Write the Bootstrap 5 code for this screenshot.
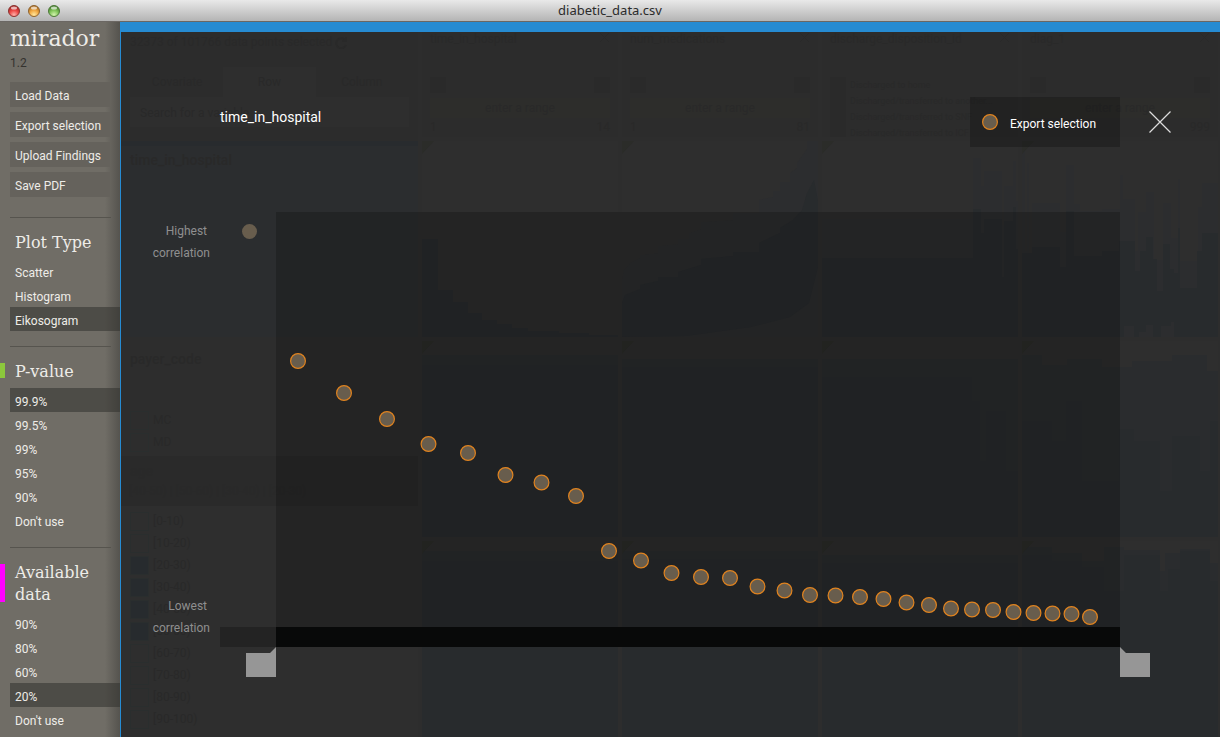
<!DOCTYPE html>
<html lang="en">
<head>
<meta charset="utf-8">
<meta name="viewport" content="width=device-width, initial-scale=1">
<title>diabetic_data.csv</title>
<link rel="stylesheet" href="https://cdn.jsdelivr.net/npm/bootstrap@5.3.0/dist/css/bootstrap.min.css">
<style>
  body { font: 12px/24px Roboto, sans-serif; background: #2d2d2d; }
  a { color: inherit; text-decoration: none; }

  /* window frame */
  .titlebar { height: 22px; background: linear-gradient(#e9e9e9, #b4b4b4); border-bottom: 1px solid #6b6763; color: #2b2b2b; font: 13px/21px "Noto Sans", sans-serif; }
  .lights { left: 7px; top: 4px; }

  /* sidebar */
  .side { width: 120px; background: linear-gradient(to right, transparent 105px, #55534e 120px), #706d66; color: #eeece8; }
  .brand { padding-left: 10px; font: 22px/34px "DejaVu Serif", serif; }
  .version { padding-left: 10px; line-height: 14px; color: #35332f; }
  .side-btns { gap: 5px; margin: 12px 10px 21px; }
  .side-btn { height: 25px; padding: 4px 0 0 5px; border: 0; background: #65625c; color: #eeece8; line-height: 21px; text-align: left; white-space: nowrap; }
  .group { padding: 14px 0 16px; }
  .group:last-child { padding-bottom: 0; }
  .group::before { content: ""; position: absolute; top: -1px; left: 10px; right: 9px; border-top: 1px solid #56544e; }
  .group h2 { margin: 0 15px 5px; font: 16px/22px "DejaVu Serif", serif; }
  .group a { display: block; height: 24px; margin-left: 10px; padding: 2px 0 0 5px; line-height: 24px; }
  .group a.active { background: rgba(50, 49, 45, .55); }
  .flag::after { content: ""; position: absolute; left: 0; top: 16px; width: 5px; height: 15px; background: #8cc83c; }
  .flag-tall::after { height: 38px; background: #f0f; }

  /* main area: dimmed matrix below, ranking dialog above */
  .stage { border-left: 1px solid #268bd2; border-top: 10px solid #268bd2; background: #2d2d2d; }
  .matrix { display: grid; grid-template-columns: 297px 1fr; column-gap: 4px; color: #292929; padding-right: 2px; }
  .tiles { display: grid; grid-template: 105px repeat(3, minmax(0, 1fr)) / repeat(4, minmax(0, 1fr)); gap: 4px; }
  .tiles svg.mosaic { width: 100%; height: 100%; background: #2e2e2e; }
  .head-cell { padding: 0 8px; overflow: hidden; background: #2c2c2c; }
  .head-name { height: 45px; line-height: 14px; }
  .range { background: #2d2d2b; height: 20px; line-height: 20px; margin-top: 5px; }
  .ends-row { line-height: 18px; }
  .nub { width: 16px; height: 16px; background: #2a2a2a; }
  .picks { font-size: 9px; line-height: 16px; padding-left: 20px; white-space: nowrap; background: linear-gradient(#2a2a2a, #2a2a2a) 0 0 / 16px 100% no-repeat; }
  .vars { background: #2c2c2c; }
  .vars-head { flex: 0 0 109px; }
  .count { height: 35px; line-height: 20px; padding: 0 9px; }
  .tabs-row { height: 30px; line-height: 30px; margin: 0 10px; }
  .tab-on { background: #2e2e2e; }
  .find { height: 30px; margin: 0 9px; background: #2e2e2e; padding: 4px 10px; }
  .var-a { background: #2b2d2f; border-top: 5px solid #282b2e; flex: 0 0 196px; }
  .var-b { flex: 0 0 119px; background: #2d2d2d; }
  .var-b .chk-row:first-of-type { margin-top: 36px; }
  .var-c { background: #2a2a2a; flex: 0 0 50px; line-height: 22px; padding-top: 5px; }
  .var-c div { line-height: 20px; }
  .ages { background: #2e2e2e; flex: 1 0 0; padding-top: 4px; }
  .var-name { font-size: 14px; font-weight: 500; padding: 0 9px; line-height: 28px; }
  .chk { width: 19px; height: 19px; border: 1px solid #2a2e2e; }
  .chk.on { background: #272b2e; }
  .chk-row { height: 22px; gap: 4px; display: flex; align-items: center; padding-left: 9px; }

  .rank { padding: 65px 0 90px; }
  .rank-head { padding-left: 99px; margin-bottom: 65px; height: 50px; color: #fff; }
  .rank-title { font-size: 14px; padding-top: 8px; }
  .export { width: 150px; height: 50px; border: 0; background: rgba(0, 0, 0, .22); color: #fff; padding: 0 0 0 12px; gap: 12px; }
  .shut { width: 100px; border: 0; background: none; padding: 0 20px 0 0; }
  .ends { width: 155px; padding: 8px 66px 8px 0; color: #8f8f8f; line-height: 22px; text-align: right; }
  .legend-dot { position: absolute; left: 121px; top: 12px; width: 15px; height: 15px; border-radius: 50%; background: #685d4d; }
  .plot { background: rgba(0, 0, 0, .2); margin-right: 100px; }
  .axis { position: absolute; bottom: 0; height: 20px; background: #080909; width: 100%; }
  .axis-lead { position: absolute; bottom: 0; right: 0; width: 56px; height: 20px; background: #232323; }
  .grip { position: absolute; top: 100%; width: 30px; height: 30px; padding: 0; border: 0; background: #969696; }
  .grip-low { right: 100%; clip-path: polygon(100% 0, 100% 100%, 0 100%, 0 6px, 80% 6px); }
  .grip-high { left: 100%; clip-path: polygon(0 0, 0 100%, 100% 100%, 100% 6px, 20% 6px); }
  .dots circle { fill: #685d4d; stroke: #e0831f; stroke-width: 1.2; }
</style>
</head>
<body>
<div class="d-flex flex-column min-vh-100">
  <header class="titlebar position-relative text-center flex-shrink-0">
    <svg class="lights position-absolute" width="56" height="14" aria-hidden="true">
      <defs>
        <radialGradient id="r" cx=".5" cy=".85" r=".8"><stop offset="0" stop-color="#ffb3ab"/><stop offset=".5" stop-color="#ee4b48"/><stop offset="1" stop-color="#a3201f"/></radialGradient>
        <radialGradient id="y" cx=".5" cy=".85" r=".8"><stop offset="0" stop-color="#ffe9a0"/><stop offset=".5" stop-color="#f2ab45"/><stop offset="1" stop-color="#a5651a"/></radialGradient>
        <radialGradient id="g" cx=".5" cy=".85" r=".8"><stop offset="0" stop-color="#d5f5b0"/><stop offset=".5" stop-color="#84c75c"/><stop offset="1" stop-color="#3f7a28"/></radialGradient>
      </defs>
      <g stroke-width="1"><circle cx="7" cy="7" r="5.5" fill="url(#r)" stroke="#8a3532"/><circle cx="27" cy="7" r="5.5" fill="url(#y)" stroke="#8f6430"/><circle cx="47" cy="7" r="5.5" fill="url(#g)" stroke="#4e7a3a"/></g>
      <g fill="#fff" opacity=".65"><ellipse cx="7" cy="4" rx="3" ry="1.5"/><ellipse cx="27" cy="4" rx="3" ry="1.5"/><ellipse cx="47" cy="4" rx="3" ry="1.5"/></g>
    </svg>
    diabetic_data.csv
  </header>

  <div class="d-flex flex-grow-1">
    <nav class="side flex-shrink-0">
      <div class="brand">mirador</div>
      <div class="version">1.2</div>
      <div class="side-btns d-grid">
        <button class="side-btn" type="button">Load Data</button>
        <button class="side-btn" type="button">Export selection</button>
        <button class="side-btn" type="button">Upload Findings</button>
        <button class="side-btn" type="button">Save PDF</button>
      </div>
      <section class="group position-relative">
        <h2>Plot Type</h2>
        <a href="#">Scatter</a><a href="#">Histogram</a><a href="#" class="active">Eikosogram</a>
      </section>
      <section class="group flag position-relative">
        <h2>P-value</h2>
        <a href="#" class="active">99.9%</a><a href="#">99.5%</a><a href="#">99%</a><a href="#">95%</a><a href="#">90%</a><a href="#">Don't use</a>
      </section>
      <section class="group flag flag-tall position-relative">
        <h2>Available data</h2>
        <a href="#">90%</a><a href="#">80%</a><a href="#">60%</a><a href="#" class="active">20%</a><a href="#">Don't use</a>
      </section>
    </nav>

    <main class="stage position-relative flex-grow-1 d-flex">
      <div class="matrix position-absolute top-0 start-0 w-100 h-100 overflow-hidden">
        <div class="vars d-flex flex-column overflow-hidden">
          <div class="vars-head">
            <div class="count">32373 of 101766 data points selected
              <svg width="12" height="12" fill="none" stroke="#292929" stroke-width="2" aria-hidden="true"><path d="M10 3A5 5 0 1 0 11 8M11 0V4H7"/></svg>
            </div>
            <div class="tabs-row row g-0 text-center"><span class="col">Covariate</span><span class="col tab-on">Row</span><span class="col">Column</span></div>
            <div class="find">Search for a variable</div>
          </div>
          <div class="var-a"><div class="var-name">time_in_hospital</div></div>
          <div class="var-b">
            <h3 class="var-name m-0 pt-2">payer_code</h3>
            <div class="chk-row"><i class="chk"></i>MC</div>
            <div class="chk-row"><i class="chk"></i>MD</div>
          </div>
          <div class="var-c"><div class="var-name">age</div><div class="px-2 text-nowrap">[40-50) | [50-60) | [30-40) | [20-30)</div></div>
          <div class="ages" id="ages"></div>
        </div>
        <div class="tiles" id="tiles"></div>
      </div>

      <section class="rank position-relative flex-grow-1 d-flex flex-column">
        <div class="rank-head d-flex">
          <div class="rank-title flex-grow-1">time_in_hospital</div>
          <button class="export d-flex align-items-center" type="button">
            <svg width="16" height="16" class="dots" aria-hidden="true"><circle cx="8" cy="8" r="7.4"/></svg>
            <span class="pt-1">Export selection</span>
          </button>
          <button class="shut d-flex align-items-center justify-content-center" type="button" aria-label="Close">
            <svg width="22" height="22" stroke="#ddd" stroke-width="1.2"><path d="M.5.5 21.5 21.5M21.5.5.5 21.5"/></svg>
          </button>
        </div>
        <div class="d-flex flex-grow-1">
          <div class="ends position-relative d-flex flex-column justify-content-between flex-shrink-0">
            <span>Highest&nbsp;<br>correlation</span>
            <span>Lowest&nbsp;<br>correlation</span>
            <i class="legend-dot"></i><i class="axis-lead"></i>
          </div>
          <div class="plot position-relative flex-grow-1">
            <div class="axis"></div>
            <svg class="dots position-absolute top-0 start-0 w-100 h-100" id="dots" role="img" aria-label="Correlation ranking"></svg>
            <button class="grip grip-low" type="button" aria-label="Lower bound"></button>
            <button class="grip grip-high" type="button" aria-label="Upper bound"></button>
          </div>
        </div>
      </section>
    </main>
  </div>
</div>
<script>
  // [position, depth] of every ranked variable on an 844 x 435 plot
  const ranked = [[22,149],[68,181],[111,207],[152.5,232],[192,241],[229.5,263],[265.5,270.5],[300,284],[333,339],[365,348.5],[395.5,361],[425,365],[454,366],[481.5,374.5],[508.5,378.5],[534,383],[559.5,383.5],[584,385],[607.5,387],[630.5,390.5],[653,393],[675,396.5],[696,397.5],[717,398],[737.5,400],[757.5,401],[776.5,401.5],[795.5,402],[814,405]];
  document.getElementById('dots').innerHTML = ranked.map(([x, y]) =>
    `<circle cx="${x / 8.44}%" cy="${y / 4.35}%" r="7.4"/>`).join('');

  document.getElementById('ages').innerHTML = [0,10,20,30,40,50,60,70,80,90].map((a, i) =>
    `<div class="chk-row"><i class="chk${i > 1 && i < 6 ? ' on' : ''}"></i>[${a}-${a + 10})</div>`).join('');

  const cross = '<svg width="11" height="11" stroke="#292929" aria-hidden="true"><path d="M1 1 10 10M10 1 1 10"/></svg>';
  const ranged = (lo, hi) => `<div class="d-flex justify-content-between"><i class="nub"></i><i class="nub"></i></div>
    <div class="range text-center">enter a range</div>
    <div class="ends-row d-flex justify-content-between"><span>${lo}</span><span>${hi}</span></div>`;
  const columns = [
    ['time_in_hospital', ranged(1, 14)],
    ['num_medications', ranged(1, 81)],
    ['discharge_disposition_id', '<div class="picks">Discharged to home<br>Discharged/transferred to another...<br>Discharged/transferred to SNF<br>Discharged/transferred to ICF</div>'],
    ['diag_1', ranged('', 999)]
  ];
  const heads = columns.map(([name, body]) =>
    `<div class="head-cell"><div class="head-name d-flex justify-content-between"><span>${name}</span>${cross}</div>${body}</div>`).join('');

  const pale = '#2c2d2f', mid = '#2a2c2e', deep = '#282b2d';
  const rect = (x, y, w, h, c) => `<rect x="${x}" y="${y}" width="${w}" height="${h}" fill="${c}"/>`;
  // bars from [x, top] pairs, each reaching to the next x
  const bars = (pts, c) => pts.map(([x, y], i) => rect(x, y, (pts[i + 1] || [196])[0] - x, 196 - y, c)).join('');
  const flag = '<path d="M0 0H12L0 13Z" fill="#2b2c29"/>';
  const cells = [
    `<path fill="${deep}" d="M0 98H16V149H31V161H46V172H60V179H75V183H90V187H106V190H137V192H167V194H196V196H0Z"/>`,
    `<path fill="${pale}" d="M0 138L2 129 8 122 18 117V114L36 112V105L56 103V98H67V92L79 88V81L111 79V72H137V59L151 56V50H158V41H168V32L175 27V22L185 8V0H196V196H0Z"/><path fill="${deep}" d="M0 162L3 154 18 148V144L36 140V136H56V131L79 124V118L111 115V111H137V102L158 92V87L171 79 180 69 185 52 192 39 196 60V126L187 162 168 176 129 186 64 195 0 196Z"/>`,
    rect(0,78,151,118,pale) + rect(0,117,151,79,deep)
      + bars([[151,17],[159,45],[162,30],[180,84],[182,45],[191,20],[194,60]], pale)
      + bars([[151,68],[159,92],[162,78],[180,136],[182,80],[191,66],[194,108]], deep),
    bars([[0,0],[3,110],[5,22],[7,125],[10,62],[38,91],[44,24],[52,63],[58,70],[80,68],[98,34],[101,58],[113,110],[116,71],[124,51],[132,119],[141,62],[149,97],[156,38],[158,120],[176,66],[180,42]], pale)
      + bars([[0,112],[10,106],[38,126],[44,70],[52,115],[80,110],[97,100],[113,130],[118,110],[124,96],[131,118],[135,150],[141,103],[148,128],[152,132],[156,87],[158,147],[175,110],[180,92]], deep)
      + bars([[102,185],[112,196],[117,191],[124,184],[131,196],[139,185],[149,181],[152,196]], pale),
    rect(0,14,196,182,mid) + rect(0,24,196,172,deep),
    rect(0,18,196,178,mid) + rect(0,26,196,170,deep),
    rect(0,18,196,178,mid) + rect(0,36,150,160,deep) + bars([[150,60],[158,120],[164,70],[184,130]], deep),
    bars([[0,14],[20,24],[45,18],[80,26],[110,20],[150,14],[185,30]], mid)
      + bars([[0,80],[30,100],[44,60],[60,140],[97,88],[112,100],[138,150],[150,95],[178,130],[188,80]], deep),
    rect(0,10,196,186,mid) + rect(0,20,196,176,deep),
    rect(0,10,196,186,mid) + rect(0,18,196,178,deep),
    rect(0,14,196,182,mid) + rect(0,22,196,174,deep),
    bars([[0,6],[30,12],[60,20],[82,6],[102,9],[138,30],[143,12],[158,8],[188,22]], mid)
      + bars([[0,14],[30,20],[60,26],[82,50],[102,14],[138,50],[146,28],[158,10],[188,40]], deep)
  ];
  document.getElementById('tiles').innerHTML = heads + cells.map(c =>
    `<svg class="mosaic" viewBox="0 0 196 196" preserveAspectRatio="none" aria-hidden="true">${c}${flag}</svg>`).join('');
</script>
<script src="https://cdn.jsdelivr.net/npm/bootstrap@5.3.0/dist/js/bootstrap.bundle.min.js"></script>
</body>
</html>
